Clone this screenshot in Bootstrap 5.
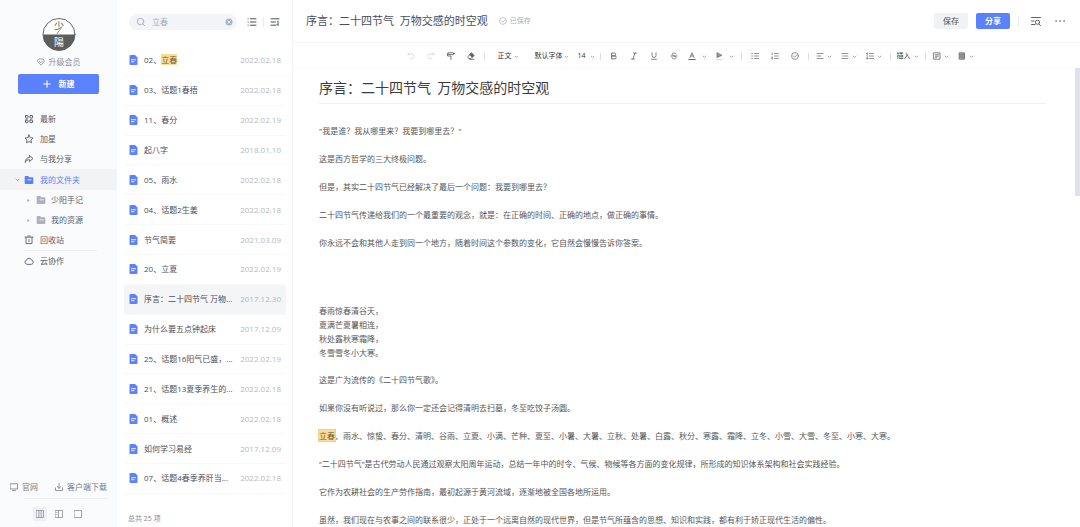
<!DOCTYPE html>
<html lang="zh-CN">
<head>
<meta charset="utf-8">
<meta name="viewport" content="width=device-width, initial-scale=1">
<title>序言：二十四节气 万物交感的时空观</title>
<link rel="stylesheet" href="https://cdn.jsdelivr.net/npm/bootstrap@5.3.0/dist/css/bootstrap.min.css">
<style>
:root { --brand:#5b82fc; --ink:#4b4f5c; --soft:#8d919c; }
body { font-family:"Open Sans","Noto Sans CJK SC",sans-serif; font-size:8px; line-height:12px; color:var(--ink); background:#fff; }
button, select, input { font:inherit; color:inherit; border:0; background:none; padding:0; }
a { color:inherit; text-decoration:none; }
svg { display:block; flex:none; fill:none; stroke:currentColor; stroke-linecap:round; stroke-linejoin:round; }
.i8 { width:8px; height:8px; }
.i10 { width:10px; height:10px; }
.chev { width:5px; height:5px; color:#999; }
mark { padding:0; color:#6b5a35; background:#fbdc98; }

/* folder sidebar */
.side { width:117px; background:#fafbfd; flex:none; }
.logo { width:34px; height:36px; margin-bottom:2px; stroke:none; }
.member { color:var(--soft); height:12px; }
.new-btn { height:20px; margin:0 18px; border-radius:2px; background:var(--brand); color:#fff; font-weight:600; }
.side nav { padding-top:15px; }
.nav-row { height:20px; padding-left:24px; gap:6px; color:#5a5e6a; }
.nav-row.open { height:21px; padding-left:15px; gap:4px; background:#f2f3f5; color:var(--brand); }
.nav-row.open span { padding-left:2px; }
.nav-row.sub { padding-left:26px; gap:5px; }
.nav-row.sub svg + svg { color:#aeb1bb; }
.nav-row.ruled { position:relative; height:21px; padding-top:1px; }
.nav-row.ruled::before { content:""; position:absolute; top:0; left:24px; right:20px; border-top:1px solid #eff0f4; }
.side-links { padding:0 10px 5px; color:#777b87; }
.side-rule { margin:0 9px 0 24px; border-top:1px solid #f0f1f4; }
.views { gap:5px; padding:8px 0 6px 33px; color:#8d919c; }
.views button { width:14px; height:14px; border-radius:2px; }
.views button.on { background:#eeeff2; }

/* document list */
.docs { width:176px; flex:none; border-right:1px solid #f4f5f8; }
.docs-top { height:46px; padding:0 12px 2px; }
.search { width:108px; height:16px; border-radius:8px; background:#f2f4f7; padding:0 4px 0 7px; gap:6px; color:#a5a9b4; }
.search input { width:100%; min-width:0; outline:0; }
.docs-list { min-height:0; padding:0 6px 0 7px; }
.docs-list a { border-bottom:1px solid #f7f8f9; padding:0 5px; gap:6px; min-height:24px; }
.docs-list a.on { background:#f4f5f7; border-radius:3px; }
.docs-list .name { width:90px; }
.docs-list time { margin-left:auto; color:#b6b9c2; }
.docs-foot { height:33px; padding:0 11px 2px; font-size:7px; color:#858995; }
.page-ico { color:var(--brand); width:9px; height:10px; }

/* editor */
.ed-top { height:44px; padding:1px 15px 0 13px; border-bottom:1px solid #f6f6f8; }
.ed-top h1 { font-size:11px; line-height:16px; font-weight:400; white-space:pre; margin:0; color:#494d5d; font-family:"Open Sans","Noto Sans CJK SC",sans-serif; }
.saved { font-size:7px; gap:3px; margin-left:11px; color:#a9adb7; }
.act { height:16px; width:34px; border-radius:2px; background:#f1f2f4; }
.act.main { background:var(--brand); color:#fff; font-weight:600; }
.find { margin:0 14px 0 12px; }
.v-rule { width:1px; height:11px; background:#ececf0; }
.tools { height:26px; padding:3px 0 0 6px; border-bottom:1px solid #f8f8fa; font-size:7px; color:#333; }
.tools .tb { width:20px; height:20px; display:flex; align-items:center; justify-content:center; flex:none; color:#666; }
.tools .tb svg { overflow:visible; }
.tools .tb.pair { width:25px; gap:3px; }
.tools .tb.wide { width:27px; gap:6px; }
.tools .tb.off { color:#d5d5d8; }
.tools .tb.label { width:28px; gap:3px; color:#333; }
.tools .v-rule { height:7px; margin:0 3px; background:#ddd; flex:none; }
.tools select { appearance:none; height:16px; flex:none; outline:0; background:url("data:image/svg+xml,%3Csvg xmlns='http://www.w3.org/2000/svg' viewBox='0 0 5 5'%3E%3Cpath d='M1 2l1.500 1.500L4 2' fill='none' stroke='%23999' stroke-width='.8'/%3E%3C/svg%3E") right 5px center/5px no-repeat; }
.s-style { width:36px; padding-left:10px; }
.s-font { width:50px; padding-left:11px; }
.s-size { width:23px; padding-left:4px; background-position:right 2px center !important; }
.canvas { overflow:hidden; min-height:0; padding:9px 34px 0 26px; position:relative; }
.thumb { position:absolute; top:0; right:0; width:5px; height:128px; background:#e1e1ec; }
.canvas h2 { font-size:14px; line-height:20px; font-weight:400; white-space:pre; margin:0 0 20px; padding-bottom:6px; border-bottom:1px solid #f0f0f0; color:#3c3c3c; font-family:"Noto Sans CJK SC",sans-serif; }
.canvas p { line-height:14px; margin:0 0 14px; color:#555; white-space:nowrap; }
.canvas p.pause { margin-bottom:54px; }
.canvas p.verse { margin-bottom:13px; }
.canvas mark { outline:1px solid #f4cf87; }
</style>
</head>
<body>
<svg class="d-none">
  <symbol id="doc" viewBox="0 0 8 10"><path d="M1 0h4.500L8 2.500V9a1 1 0 0 1-1 1H1a1 1 0 0 1-1-1V1a1 1 0 0 1 1-1z" fill="currentColor" stroke="none"/><path d="M2 4.700h4M2 6.700h2.500" stroke="#fff" stroke-width=".9"/></symbol>
  <symbol id="folder" viewBox="0 0 10 10"><path d="M1.500 1h2.700l1 1.300h3.300a.8.8 0 0 1 .8.800V8.200a.8.800 0 0 1-.8.800h-7a.8.800 0 0 1-.8-.8V1.800A.8.800 0 0 1 1.500 1z" fill="currentColor" stroke="none"/><path d="M4 4.800h3" stroke="#fff" stroke-width=".8"/></symbol>
  <symbol id="down" viewBox="0 0 5 5"><path d="M1 2l1.500 1.500L4 2" stroke-width=".8"/></symbol>
  <symbol id="right" viewBox="0 0 5 5"><path d="M1.500 1l2 1.500-2 1.500z" fill="currentColor" stroke="none"/></symbol>
</svg>
<div class="d-flex vh-100 overflow-hidden">

  <aside class="side d-flex flex-column">
    <div class="d-flex flex-column align-items-center pt-3">
      <svg class="logo" viewBox="0 0 34 36">
        <circle cx="17" cy="18.500" r="16" fill="#fff" stroke="#666"/>
        <path d="M1 18.500h32a16 16 0 0 1-32 0z" fill="#5d5d5d"/>
        <text x="17" y="14" text-anchor="middle" font-size="10" fill="#555" font-family="Noto Sans CJK TC">少</text>
        <path d="M19 12.500c-1 2-3 2.500-4 5.500" stroke="#777" stroke-width=".8"/>
        <text x="17" y="30" text-anchor="middle" font-size="10" fill="#fff" font-family="Noto Sans CJK TC">陽</text>
      </svg>
    </div>
    <a href="#" class="member d-flex align-items-center justify-content-center gap-1 mb-2 pt-1">
      <svg class="i8" viewBox="0 0 10 10"><path d="M2.500 1.200h5L9.300 4 5 9 .7 4zM3 4l2 2 2-2"/></svg>升级会员</a>
    <button class="new-btn d-flex align-items-center justify-content-center gap-2" type="button">
      <svg class="i8" viewBox="0 0 8 8"><path d="M4 .8v6.400M.8 4h6.400" stroke-width="1.100"/></svg>新建</button>
    <nav>
      <a href="#" class="nav-row d-flex align-items-center"><svg class="i10" viewBox="0 0 10 10"><rect x="1.500" y="1.500" width="2.600" height="2.600" rx=".4"/><rect x="6" y="1.500" width="2.600" height="2.600" rx=".4"/><rect x="1.500" y="6" width="2.600" height="2.600" rx=".4"/><rect x="6" y="6" width="2.600" height="2.600" rx=".4"/></svg>最新</a>
      <a href="#" class="nav-row d-flex align-items-center"><svg class="i10" viewBox="0 0 10 10" stroke-width=".9"><path d="M5 1l1.200 2.600 2.800.4-2 2 .5 2.800L5 7.500 2.500 8.800 3 6 1 4l2.800-.4z"/></svg>加星</a>
      <a href="#" class="nav-row d-flex align-items-center"><svg class="i10" viewBox="0 0 10 10" stroke-width=".9"><path d="M5.500 1.500l3.500 3-3.500 3V5.700C3.500 5.600 2 6.300 1.200 8.500 1.200 5.500 3 3.500 5.500 3.300z"/></svg>与我分享</a>
      <a href="#" class="nav-row open d-flex align-items-center"><svg class="chev"><use href="#down"/></svg><svg class="i10"><use href="#folder"/></svg><span>我的文件夹</span></a>
      <a href="#" class="nav-row sub d-flex align-items-center"><svg class="chev"><use href="#right"/></svg><svg class="i10"><use href="#folder"/></svg>少阳手记</a>
      <a href="#" class="nav-row sub d-flex align-items-center"><svg class="chev"><use href="#right"/></svg><svg class="i10"><use href="#folder"/></svg>我的资源</a>
      <a href="#" class="nav-row d-flex align-items-center"><svg class="i10" viewBox="0 0 10 10" stroke-width=".9"><path d="M1 2.200h8M2 2.200v6.300h6V2.200M3.700 1h2.600M5 4.500v2"/></svg>回收站</a>
      <a href="#" class="nav-row ruled d-flex align-items-center"><svg class="i10" viewBox="0 0 10 10" stroke-width=".9"><path d="M2.800 8.300a2.100 2.100 0 0 1-.3-4.100 2.700 2.700 0 0 1 5.200 0 2.100 2.100 0 0 1-.2 4.100z"/></svg>云协作</a>
    </nav>
    <div class="mt-auto">
      <div class="side-links d-flex justify-content-between">
        <a href="#" class="d-flex align-items-center gap-1"><svg class="i8" viewBox="0 0 8 8" stroke-width=".8"><path d="M.5.800h7v5.200h-7zM2.500 7.500h3"/></svg>官网</a>
        <a href="#" class="d-flex align-items-center gap-1"><svg class="i8" viewBox="0 0 8 8" stroke-width=".8"><path d="M4 .5v4.700M2.300 3.700L4 5.300l1.700-1.600M.5 5v2.500h7V5"/></svg>客户端下载</a>
      </div>
      <div class="side-rule"></div>
      <div class="views d-flex">
        <button type="button" class="on d-flex align-items-center justify-content-center" aria-label="三栏"><svg class="i8" viewBox="0 0 8 8" stroke-width=".8"><path d="M.5.500h7v7h-7zM2.900.5v7M5.200.5v7"/></svg></button>
        <button type="button" class="d-flex align-items-center justify-content-center" aria-label="双栏"><svg class="i8" viewBox="0 0 8 8" stroke-width=".8"><path d="M.5.500h7v7h-7zM3.500.5v7M1.700 2.500h.4M1.700 4.500h.4"/></svg></button>
        <button type="button" class="d-flex align-items-center justify-content-center" aria-label="单栏"><svg class="i8" viewBox="0 0 8 8" stroke-width=".8"><path d="M.5.500h7v7h-7z"/></svg></button>
      </div>
    </div>
  </aside>

  <section class="docs d-flex flex-column">
    <div class="docs-top d-flex align-items-center justify-content-between">
      <div class="search d-flex align-items-center">
        <svg class="i10" viewBox="0 0 10 10" stroke-width=".9"><circle cx="4.500" cy="4.500" r="3.200"/><path d="M7 7l1.700 1.700"/></svg>
        <input type="text" value="立春" aria-label="搜索">
        <button type="button" aria-label="清除"><svg class="i8" viewBox="0 0 8 8"><circle cx="4" cy="4" r="3.500" fill="#adb2c4" stroke="none"/><path d="M2.800 2.800l2.400 2.400M5.200 2.800L2.800 5.200" stroke="#fff" stroke-width=".7"/></svg></button>
      </div>
      <button type="button" class="ms-1" aria-label="列表"><svg class="i10" viewBox="0 0 10 10"><path d="M3.500 1.800h5.500M3.500 5h5.500M3.500 8.200h5.500M1 1.800h.2M1 5h.2M1 8.200h.2"/></svg></button>
      <div class="v-rule"></div>
      <button type="button" aria-label="排序"><svg class="i10" viewBox="0 0 10 10"><path d="M1 1.800h8M1 5h4.500M1 8.200h4.500M8 4v4.500L6.800 7.300"/></svg></button>
    </div>
    <div class="docs-list d-flex flex-column flex-fill">
      <a href="#" class="d-flex align-items-center flex-fill"><svg class="page-ico"><use href="#doc"/></svg><span class="name text-truncate">02、<mark>立春</mark></span><time>2022.02.18</time></a>
      <a href="#" class="d-flex align-items-center flex-fill"><svg class="page-ico"><use href="#doc"/></svg><span class="name text-truncate">03、话题1春捂</span><time>2022.02.18</time></a>
      <a href="#" class="d-flex align-items-center flex-fill"><svg class="page-ico"><use href="#doc"/></svg><span class="name text-truncate">11、春分</span><time>2022.02.19</time></a>
      <a href="#" class="d-flex align-items-center flex-fill"><svg class="page-ico"><use href="#doc"/></svg><span class="name text-truncate">起八字</span><time>2018.01.10</time></a>
      <a href="#" class="d-flex align-items-center flex-fill"><svg class="page-ico"><use href="#doc"/></svg><span class="name text-truncate">05、雨水</span><time>2022.02.18</time></a>
      <a href="#" class="d-flex align-items-center flex-fill"><svg class="page-ico"><use href="#doc"/></svg><span class="name text-truncate">04、话题2生姜</span><time>2022.02.18</time></a>
      <a href="#" class="d-flex align-items-center flex-fill"><svg class="page-ico"><use href="#doc"/></svg><span class="name text-truncate">节气简要</span><time>2021.03.09</time></a>
      <a href="#" class="d-flex align-items-center flex-fill"><svg class="page-ico"><use href="#doc"/></svg><span class="name text-truncate">20、立夏</span><time>2022.02.19</time></a>
      <a href="#" class="on d-flex align-items-center flex-fill"><svg class="page-ico"><use href="#doc"/></svg><span class="name text-truncate">序言：二十四节气 万物...</span><time>2017.12.30</time></a>
      <a href="#" class="d-flex align-items-center flex-fill"><svg class="page-ico"><use href="#doc"/></svg><span class="name text-truncate">为什么要五点钟起床</span><time>2017.12.09</time></a>
      <a href="#" class="d-flex align-items-center flex-fill"><svg class="page-ico"><use href="#doc"/></svg><span class="name text-truncate">25、话题16阳气已盛，...</span><time>2022.02.19</time></a>
      <a href="#" class="d-flex align-items-center flex-fill"><svg class="page-ico"><use href="#doc"/></svg><span class="name text-truncate">21、话题13夏季养生的...</span><time>2022.02.18</time></a>
      <a href="#" class="d-flex align-items-center flex-fill"><svg class="page-ico"><use href="#doc"/></svg><span class="name text-truncate">01、概述</span><time>2022.02.18</time></a>
      <a href="#" class="d-flex align-items-center flex-fill"><svg class="page-ico"><use href="#doc"/></svg><span class="name text-truncate">如何学习易经</span><time>2017.12.09</time></a>
      <a href="#" class="d-flex align-items-center flex-fill"><svg class="page-ico"><use href="#doc"/></svg><span class="name text-truncate">07、话题4春季养肝当...</span><time>2022.02.18</time></a>
    </div>
    <div class="docs-foot d-flex align-items-end">总共 25 项</div>
  </section>

  <main class="d-flex flex-column flex-fill overflow-hidden">
    <header class="ed-top d-flex align-items-center">
      <h1>序言：二十四节气  万物交感的时空观</h1>
      <span class="saved d-flex align-items-center"><svg class="i8" viewBox="0 0 8 8" stroke-width=".7"><circle cx="4" cy="4" r="3.400"/><path d="M2.500 4l1.200 1.200 2-2.200"/></svg>已保存</span>
      <button type="button" class="act ms-auto me-2">保存</button>
      <button type="button" class="act main me-2">分享</button>
      <div class="v-rule"></div>
      <button type="button" class="find" aria-label="查找"><svg class="i10" viewBox="0 0 10 10" stroke-width=".9"><path d="M.5 1.500h9M.5 5h2.500M.5 8.500h3.500M8 8l1.500 1.500"/><circle cx="6.500" cy="6.200" r="2.100"/></svg></button>
      <button type="button" aria-label="更多"><svg class="i10" viewBox="0 0 10 10"><path d="M1 5h.2M5 5h.2M9 5h.2" stroke-width="1.400"/></svg></button>
    </header>

    <div class="tools d-flex align-items-center justify-content-center" role="toolbar">
      <button type="button" class="tb off" aria-label="撤销"><svg class="i8" viewBox="0 0 8 8" stroke-width=".8"><path d="M2 .8L.8 2 2 3.200M.8 2h4a2.300 2.300 0 0 1 0 4.700H3"/></svg></button>
      <button type="button" class="tb off" aria-label="重做"><svg class="i8" viewBox="0 0 8 8" stroke-width=".8"><path d="M6 .8L7.200 2 6 3.200M7.200 2h-4a2.300 2.300 0 0 0 0 4.700H5"/></svg></button>
      <button type="button" class="tb" aria-label="格式刷"><svg class="i8" viewBox="0 0 8 8" stroke-width=".9"><path d="M1.500.800h5v1.800h-5zM.5 1.500V4H4v3.500M6.500 1.500h1"/></svg></button>
      <button type="button" class="tb" aria-label="清除格式"><svg class="i8" viewBox="0 0 8 8" stroke-width=".9"><path d="M1 4.500L4.500 1l2.500 2.500-3.200 3H2.300zM2.500 7.300H7"/><path d="M2.700 2.800L5.200 5.300 7 3.500 4.500 1z" fill="currentColor"/></svg></button>
      <div class="v-rule"></div>
      <select class="s-style" aria-label="段落样式"><option>正文</option></select>
      <select class="s-font" aria-label="字体"><option>默认字体</option></select>
      <select class="s-size" aria-label="字号"><option>14</option></select>
      <div class="v-rule"></div>
      <button type="button" class="tb" aria-label="粗体"><svg class="i8" viewBox="0 0 8 8" stroke-width=".9"><path d="M2 1h2.300a1.400 1.400 0 0 1 0 2.900H2zM2 3.900h2.700a1.500 1.500 0 0 1 0 3H2z"/></svg></button>
      <button type="button" class="tb" aria-label="斜体"><svg class="i8" viewBox="0 0 8 8" stroke-width=".8"><path d="M3.500 1h3M1.500 7h3M5 1L3 7"/></svg></button>
      <button type="button" class="tb" aria-label="下划线"><svg class="i8" viewBox="0 0 8 8" stroke-width=".8"><path d="M2 .8v2.700a2 2 0 0 0 4 0V.8M1.500 7.300h5"/></svg></button>
      <button type="button" class="tb" aria-label="删除线"><svg class="i8" viewBox="0 0 8 8" stroke-width=".8"><path d="M6 2C5.500.500 2.200.600 2.200 2.300c0 1.700 3.800 1.400 3.800 3.200C6 7.300 2.500 7.400 2 5.700M1 4h6"/></svg></button>
      <button type="button" class="tb wide" aria-label="文字颜色"><svg class="i8" viewBox="0 0 8 8" stroke-width=".8"><path d="M2 5.500L4 .8l2 4.700M2.800 4h2.400"/><path d="M.8 7.500h6.400" stroke="#e0304a" stroke-width="1"/></svg><svg class="chev"><use href="#down"/></svg></button>
      <button type="button" class="tb wide" aria-label="背景颜色"><svg class="i8" viewBox="0 0 8 8" stroke-width=".8"><path d="M2 1v4.500L6.500 3.500z" fill="#999"/><path d="M.8 7.500h6.400" stroke="#f6ec5a" stroke-width="1"/></svg><svg class="chev"><use href="#down"/></svg></button>
      <div class="v-rule"></div>
      <button type="button" class="tb" aria-label="无序列表"><svg class="i8" viewBox="0 0 8 8" stroke-width=".7"><path d="M3.500 1.500h4M3.500 4h4M3.500 6.500h4M.7 1.500h1M.7 4h1M.7 6.500h1"/></svg></button>
      <button type="button" class="tb" aria-label="有序列表"><svg class="i8" viewBox="0 0 8 8" stroke-width=".7"><path d="M3.500 1.500h4M3.500 4h4M3.500 6.500h4M1.200.8v2M.7 5h1L.7 7h1"/></svg></button>
      <button type="button" class="tb" aria-label="待办"><svg class="i8" viewBox="0 0 8 8" stroke-width=".7"><circle cx="4" cy="4" r="3.400"/><path d="M2.500 4l1.200 1.200 2-2.200"/></svg></button>
      <div class="v-rule"></div>
      <button type="button" class="tb pair" aria-label="对齐"><svg class="i8" viewBox="0 0 8 8" stroke-width=".7"><path d="M1 1.500h6M1 4h4M1 6.500h6"/></svg><svg class="chev"><use href="#down"/></svg></button>
      <button type="button" class="tb pair" aria-label="缩进"><svg class="i8" viewBox="0 0 8 8" stroke-width=".7"><path d="M1 1.500h6M3 4h4M1 6.500h6M1 4h.5"/></svg><svg class="chev"><use href="#down"/></svg></button>
      <button type="button" class="tb pair" aria-label="行距"><svg class="i8" viewBox="0 0 8 8" stroke-width=".7"><path d="M3.500 1.500h4M3.500 4h4M3.500 6.500h4M1.200 1v6M.5 1.700l.7-.7.7.7M.5 6.300l.7.700.7-.7"/></svg><svg class="chev"><use href="#down"/></svg></button>
      <div class="v-rule"></div>
      <button type="button" class="tb label">插入<svg class="chev"><use href="#down"/></svg></button>
      <div class="v-rule"></div>
      <button type="button" class="tb pair" aria-label="模板"><svg class="i8" viewBox="0 0 8 8" stroke-width=".8"><path d="M1 .800h6v6.400H1zM2.500 2.700h3M2.500 4.200h3M2.500 5.600h1"/></svg><svg class="chev"><use href="#down"/></svg></button>
      <button type="button" class="tb pair" aria-label="表格"><svg class="i8" viewBox="0 0 8 8" stroke-width=".8"><path d="M1.500.800h5v6.400h-5z" fill="#aaa"/><path d="M1.500 2.900h5M1.500 5h5"/></svg><svg class="chev"><use href="#down"/></svg></button>
    </div>

    <article class="canvas flex-fill">
      <div class="thumb"></div>
      <h2>序言：二十四节气  万物交感的时空观</h2>
      <p>"我是谁？我从哪里来？我要到哪里去？"</p>
      <p>这是西方哲学的三大终极问题。</p>
      <p>但是，其实二十四节气已经解决了最后一个问题：我要到哪里去？</p>
      <p>二十四节气传递给我们的一个最重要的观念，就是：在正确的时间、正确的地点，做正确的事情。</p>
      <p class="pause">你永远不会和其他人走到同一个地方，随着时间这个参数的变化，它自然会慢慢告诉你答案。</p>
      <p class="verse">春雨惊春清谷天，<br>夏满芒夏暑相连，<br>秋处露秋寒霜降，<br>冬雪雪冬小大寒。</p>
      <p>这是广为流传的《二十四节气歌》。</p>
      <p>如果你没有听说过，那么你一定还会记得清明去扫墓，冬至吃饺子汤圆。</p>
      <p><mark>立春</mark>、雨水、惊蛰、春分、清明、谷雨、立夏、小满、芒种、夏至、小暑、大暑、立秋、处暑、白露、秋分、寒露、霜降、立冬、小雪、大雪、冬至、小寒、大寒。</p>
      <p>“二十四节气”是古代劳动人民通过观察太阳周年运动，总结一年中的时令、气候、物候等各方面的变化规律，所形成的知识体系架构和社会实践经验。</p>
      <p>它作为农耕社会的生产劳作指南，最初起源于黄河流域，逐渐地被全国各地所运用。</p>
      <p>虽然，我们现在与农事之间的联系很少，正处于一个远离自然的现代世界，但是节气所蕴含的思想、知识和实践，都有利于矫正现代生活的偏性。</p>
    </article>
  </main>
</div>
<script src="https://cdn.jsdelivr.net/npm/bootstrap@5.3.0/dist/js/bootstrap.bundle.min.js"></script>
</body>
</html>
